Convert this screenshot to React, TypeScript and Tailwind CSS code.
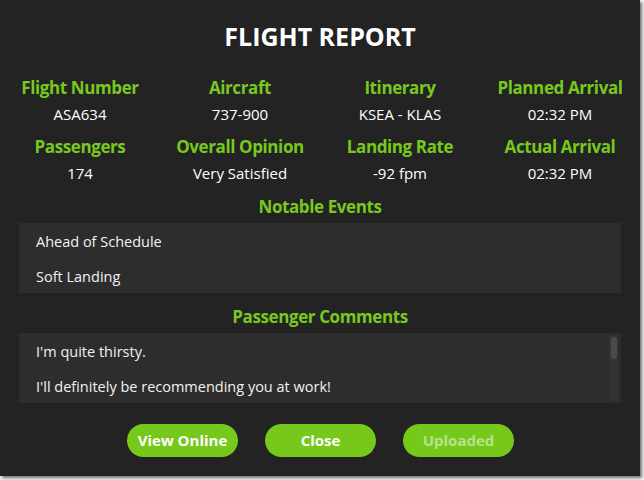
export default function App() {
  const top = [
    { label: "Flight Number", value: "ASA634" },
    { label: "Aircraft", value: "737-900" },
    { label: "Itinerary", value: "KSEA - KLAS" },
    { label: "Planned Arrival", value: "02:32 PM" },
  ];
  const bottom = [
    { label: "Passengers", value: "174" },
    { label: "Overall Opinion", value: "Very Satisfied" },
    { label: "Landing Rate", value: "-92 fpm" },
    { label: "Actual Arrival", value: "02:32 PM" },
  ];

  return (
    <div className="h-[480px] w-[644px] bg-[#f4f4f4] font-['Open_Sans',sans-serif]">
      <div className="flex h-[476px] w-[640px] flex-col bg-[#232323] shadow-[2px_2px_3px_rgba(0,0,0,0.55)]">
        <h1 className="mt-[18px] h-[36px] text-center text-[25px] font-bold leading-[36px] text-white">FLIGHT REPORT</h1>

        <div className="mt-[22px] grid grid-cols-4">
          {top.map((f) => (
            <Field key={f.label} {...f} />
          ))}
        </div>
        <div className="mt-[9px] grid grid-cols-4">
          {bottom.map((f) => (
            <Field key={f.label} {...f} />
          ))}
        </div>

        <SectionTitle className="mt-[10px]">Notable Events</SectionTitle>
        <ListBox className="mt-[4px]" items={["Ahead of Schedule", "Soft Landing"]} />

        <SectionTitle className="mt-[12px]">Passenger Comments</SectionTitle>
        <ListBox
          className="mt-[4px]"
          items={["I'm quite thirsty.", "I'll definitely be recommending you at work!"]}
          scroll
        />

        <div className="mt-[21px] flex justify-center gap-[27px] pl-[1px]">
          <Pill>View Online</Pill>
          <Pill>Close</Pill>
          <Pill dim>Uploaded</Pill>
        </div>
      </div>
    </div>
  );
}

function Field({ label, value }: { label: string; value: string }) {
  return (
    <div className="flex flex-col items-center">
      <div className="h-[24px] text-[17px] font-bold leading-[24px] tracking-[-0.4px] text-[#78c81e]">{label}</div>
      <div className="mt-[2px] h-[24px] text-[15px] leading-[24px] text-white">{value}</div>
    </div>
  );
}

function SectionTitle({ children, className }: { children: React.ReactNode; className?: string }) {
  return (
    <div className={`h-[24px] text-center text-[17px] font-bold leading-[24px] tracking-[-0.4px] text-[#78c81e] ${className ?? ""}`}>
      {children}
    </div>
  );
}

function ListBox({ items, className, scroll }: { items: string[]; className?: string; scroll?: boolean }) {
  return (
    <div className={`relative mx-[19px] h-[70px] overflow-hidden bg-[#2d2d2d] pt-[1px] ${className ?? ""}`}>
      {items.map((t) => (
        <div key={t} className="h-[35px] pl-[17px] text-[14.5px] leading-[35px] text-[#f2f2f2]">
          {t}
        </div>
      ))}
      {scroll ? (
        <div className="absolute right-[3px] top-[2px] h-[66px] w-[9px] rounded-full bg-[#333333]">
          <div className="mx-auto mt-[2px] h-[22px] w-[6px] rounded-full bg-[#4a4a4a]" />
        </div>
      ) : null}
    </div>
  );
}

function Pill({ children, dim }: { children: React.ReactNode; dim?: boolean }) {
  return (
    <button
      className={`h-[33px] w-[111px] rounded-full bg-[#76c81b] text-[15px] font-bold ${dim ? "text-[#b6e38a]" : "text-white"}`}
    >
      {children}
    </button>
  );
}
